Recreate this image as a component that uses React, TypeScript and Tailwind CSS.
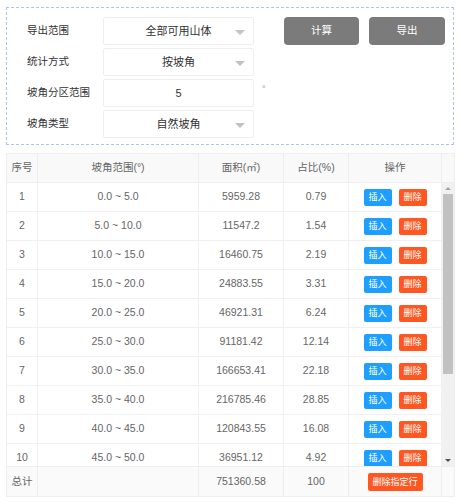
import React from "react";

const rows = [
  ["1", "0.0 ~ 5.0", "5959.28", "0.79"],
  ["2", "5.0 ~ 10.0", "11547.2", "1.54"],
  ["3", "10.0 ~ 15.0", "16460.75", "2.19"],
  ["4", "15.0 ~ 20.0", "24883.55", "3.31"],
  ["5", "20.0 ~ 25.0", "46921.31", "6.24"],
  ["6", "25.0 ~ 30.0", "91181.42", "12.14"],
  ["7", "30.0 ~ 35.0", "166653.41", "22.18"],
  ["8", "35.0 ~ 40.0", "216785.46", "28.85"],
  ["9", "40.0 ~ 45.0", "120843.55", "16.08"],
  ["10", "45.0 ~ 50.0", "36951.12", "4.92"],
];

function Caret() {
  return (
    <span className="absolute right-[8px] top-[12px] w-0 h-0 border-l-[5px] border-r-[5px] border-t-[5px] border-l-transparent border-r-transparent border-t-[#c2c2c2]" />
  );
}

function Field({ label, value, select = true }: { label: string; value: string; select?: boolean }) {
  return (
    <div className="flex items-center h-[28px]">
      <div className="w-[76px] whitespace-nowrap text-[10.5px] text-[#333]">{label}</div>
      <div className="relative w-[151px] h-[28px] bg-white border border-[#eeeeee] rounded-[2px] flex items-center justify-center text-[11px] text-[#333]">
        {value}
        {select && <Caret />}
      </div>
      {!select && <span className="ml-[8px] -mt-[6px] text-[9px] text-[#999]">°</span>}
    </div>
  );
}

const cols = ["w-[31px]", "w-[161px]", "w-[85px]", "w-[65px]", "w-[93px]"];

export default function App() {
  return (
    <div
      className="min-h-screen bg-white pt-[7px] pl-[6px] text-[#666]"
      style={{ fontFamily: '"Liberation Sans", "Noto Sans CJK SC", sans-serif' }}
    >
      <div className="w-[448px] h-[138px] border border-dashed border-[#a9c3ea] pt-[9px] pl-[20px] pr-[8px] flex justify-between">
        <div className="flex flex-col gap-[3px]">
          <Field label="导出范围" value="全部可用山体" />
          <Field label="统计方式" value="按坡角" />
          <Field label="坡角分区范围" value="5" select={false} />
          <Field label="坡角类型" value="自然坡角" />
        </div>
        <div className="flex gap-[10px] items-start">
          <button className="w-[75px] h-[28px] rounded-[4px] bg-[#7b7b7b] text-white text-[10.5px]">计算</button>
          <button className="w-[76px] h-[28px] rounded-[4px] bg-[#7b7b7b] text-white text-[10.5px]">导出</button>
        </div>
      </div>

      <div className="mt-[8px] w-[449px] border border-[#eeeeee] text-[10.5px]">
        <div className="flex h-[29px] bg-[#f9f9f9] border-b border-[#eeeeee]">
          {["序号", "坡角范围(°)", "面积(㎡)", "占比(%)", "操作"].map((h, i) => (
            <div key={h} className={`${cols[i]} border-r border-[#eeeeee] flex items-center justify-center text-[#666]`}>
              {h}
            </div>
          ))}
          <div className="flex-1" />
        </div>

        <div className="flex h-[283px] overflow-hidden">
          <div className="flex flex-col">
            {rows.map((r) => (
              <div key={r[0]} className="flex h-[29px] shrink-0 border-b border-[#f0f0f0]">
                {r.map((c, i) => (
                  <div key={i} className={`${cols[i]} border-r border-[#f0f0f0] flex items-center justify-center`}>
                    {c}
                  </div>
                ))}
                <div className={`${cols[4]} border-r border-[#f0f0f0] flex items-center justify-center gap-[7px]`}>
                  <button className="w-[28px] h-[17px] rounded-[2px] bg-[#1e9fff] text-white text-[9px] leading-[17px]">插入</button>
                  <button className="w-[28px] h-[17px] rounded-[2px] bg-[#ff5722] text-white text-[9px] leading-[17px]">删除</button>
                </div>
              </div>
            ))}
          </div>
          <div className="w-[12px] bg-[#f1f1f1] flex flex-col items-center">
            <div className="h-[11px] flex items-center justify-center">
              <span className="w-0 h-0 border-l-[3px] border-r-[3px] border-b-[3px] border-l-transparent border-r-transparent border-b-[#a3a3a3]" />
            </div>
            <div className="w-[10px] h-[180px] bg-[#c1c1c1]" />
            <div className="flex-1" />
            <div className="h-[12px] flex items-center justify-center">
              <span className="w-0 h-0 border-l-[3px] border-r-[3px] border-t-[3px] border-l-transparent border-r-transparent border-t-[#505050]" />
            </div>
          </div>
        </div>

        <div className="flex h-[30px] bg-[#fafafa] border-t border-[#eeeeee]">
          <div className={`${cols[0]} border-r border-[#eeeeee] flex items-center justify-center`}>总计</div>
          <div className={`${cols[1]} border-r border-[#eeeeee]`} />
          <div className={`${cols[2]} border-r border-[#eeeeee] flex items-center justify-center`}>751360.58</div>
          <div className={`${cols[3]} border-r border-[#eeeeee] flex items-center justify-center`}>100</div>
          <div className={`${cols[4]} border-r border-[#eeeeee] flex items-center justify-center`}>
            <button className="w-[55px] h-[18px] rounded-[2px] bg-[#ff5722] text-white text-[9px] leading-[18px]">删除指定行</button>
          </div>
          <div className="flex-1" />
        </div>
      </div>
    </div>
  );
}
